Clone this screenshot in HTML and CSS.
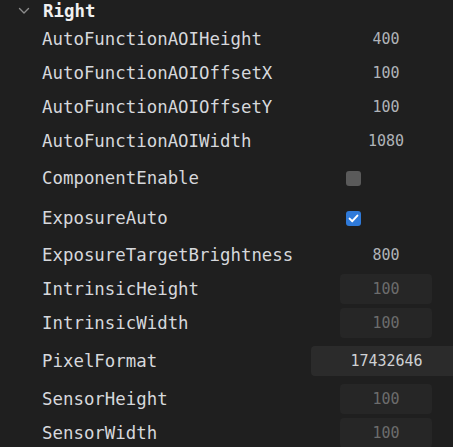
FILE: index.html
```html
<!DOCTYPE html>
<html>
<head>
<meta charset="utf-8">
<link rel="stylesheet" href="styles.css">
</head>
<body>
<div class="panel">
  <div class="group-head">
    <svg class="chevron" width="12" height="8" viewBox="0 0 12 8"><polyline points="1.5,1.5 6,6 10.5,1.5" fill="none" stroke="#8c8c8c" stroke-width="1.4" stroke-linecap="round" stroke-linejoin="round"/></svg>
    <span class="group-title">Right</span>
  </div>
  <div class="row"><span class="label">AutoFunctionAOIHeight</span><span class="value">400</span></div>
  <div class="row"><span class="label">AutoFunctionAOIOffsetX</span><span class="value">100</span></div>
  <div class="row"><span class="label">AutoFunctionAOIOffsetY</span><span class="value">100</span></div>
  <div class="row"><span class="label">AutoFunctionAOIWidth</span><span class="value">1080</span></div>
  <div class="row row-check"><span class="label">ComponentEnable</span><span class="value check-cell"><span class="checkbox"></span></span></div>
  <div class="row row-check"><span class="label">ExposureAuto</span><span class="value check-cell"><span class="checkbox checked"><svg width="15" height="15" viewBox="0 0 15 15"><polyline points="3.6,7.6 6.3,10.2 11.4,4.6" fill="none" stroke="#ffffff" stroke-width="2" stroke-linecap="round" stroke-linejoin="round"/></svg></span></span></div>
  <div class="row"><span class="label">ExposureTargetBrightness</span><span class="value">800</span></div>
  <div class="row"><span class="label">IntrinsicHeight</span><span class="value boxed disabled">100</span></div>
  <div class="row"><span class="label">IntrinsicWidth</span><span class="value boxed disabled">100</span></div>
  <div class="row row-wide"><span class="label">PixelFormat</span><span class="value boxed wide">17432646</span></div>
  <div class="row"><span class="label">SensorHeight</span><span class="value boxed disabled">100</span></div>
  <div class="row"><span class="label">SensorWidth</span><span class="value boxed disabled">100</span></div>
</div>
</body>
</html>
```

FILE: styles.css
```css
html, body {
  margin: 0;
  padding: 0;
  background: #1f1f1f;
}
body {
  width: 453px;
  height: 447px;
  overflow: hidden;
  font-family: "DejaVu Sans Mono", "Liberation Mono", monospace;
}
.panel {
  display: flex;
  flex-direction: column;
}
.group-head {
  height: 22px;
  display: flex;
  align-items: center;
}
.chevron {
  margin-left: 18px;
  margin-right: 13px;
}
.group-title {
  color: #f0f0f0;
  font-weight: bold;
  font-size: 17.4px;
  line-height: 22px;
}
.row {
  height: 34px;
  display: flex;
  align-items: center;
  padding-left: 42px;
  padding-right: 21px;
}
.row-check {
  height: 40px;
}
.row-wide {
  height: 42px;
}
.label {
  flex: 1;
  color: #d6d8dc;
  font-size: 17.4px;
  white-space: nowrap;
}
.value {
  width: 92px;
  height: 30px;
  flex: none;
  display: flex;
  align-items: center;
  justify-content: center;
  font-size: 15px;
  color: #b0b3b8;
  border-radius: 4px;
}
.boxed {
  background: #262626;
}
.disabled {
  color: #6c6c6c;
}
.wide {
  width: 151px;
  margin-left: -29px;
  margin-right: -30px;
  background: #2b2b2b;
  color: #cfd1d4;
}
.check-cell {
  justify-content: flex-start;
}
.checkbox {
  width: 15px;
  height: 15px;
  margin-left: 6px;
  border-radius: 3px;
  background: #5a5a5a;
  display: block;
}
.checkbox.checked {
  background: #2f7ad9;
}
.checkbox svg {
  display: block;
}
```
